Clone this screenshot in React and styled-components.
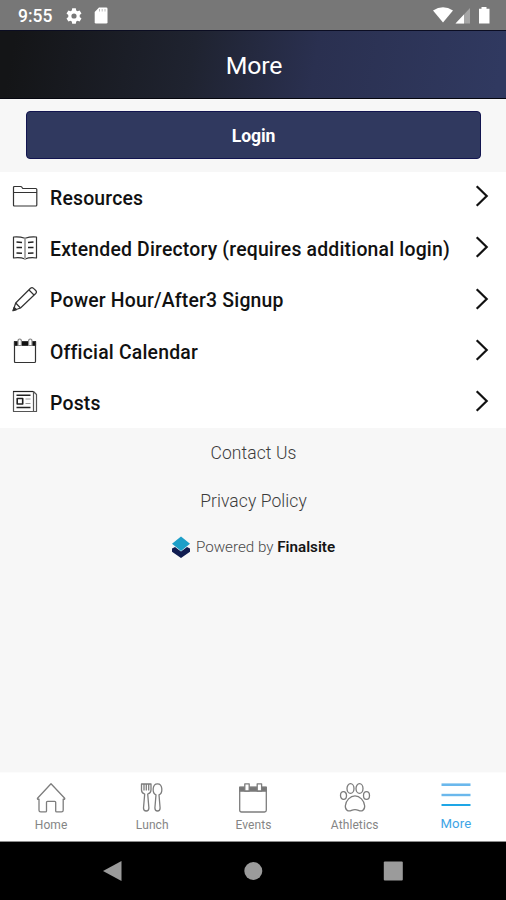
import React, { useState } from "react";
import styled, { createGlobalStyle } from "styled-components";

const GlobalStyle = createGlobalStyle`
  * {
    box-sizing: border-box;
  }

  body {
    margin: 0;
    font-family: Roboto, sans-serif;
    background: #f7f7f7;
  }
`;

const Screen = styled.div`
  width: 506px;
  height: 900px;
  display: flex;
  flex-direction: column;
  overflow: hidden;
  background: #f7f7f7;
`;

const StatusBar = styled.div`
  height: 30px;
  flex: none;
  display: flex;
  justify-content: space-between;
  background: #777777;
  color: #fff;
`;

const StatusGroup = styled.div`
  display: flex;
  align-items: center;
  padding: 1px 0 0 18px;
`;

const Clock = styled.span`
  width: 48px;
  font-size: 17.5px;
  font-weight: 500;
  line-height: 30px;
`;

const Header = styled.header`
  height: 69px;
  flex: none;
  display: flex;
  align-items: center;
  justify-content: center;
  padding: 2px 0 0 2px;
  border-top: 1px solid #0b0d22;
  border-bottom: 1px solid #05060f;
  background: linear-gradient(100deg, #141517 3%, #1f2330 38%, #2a3050 62%, #303960 98%);
  color: #fff;
  font-size: 24.8px;
  letter-spacing: -0.2px;
`;

const LoginArea = styled.div`
  height: 73px;
  flex: none;
  padding: 12px 25px 0 26px;
`;

const LoginButton = styled.button`
  display: block;
  width: 100%;
  height: 48px;
  padding: 1px 0 0;
  border: 1.5px solid #121550;
  border-radius: 4px;
  background: #30395f;
  color: #fff;
  font-family: inherit;
  font-size: 17.6px;
  font-weight: 700;
  letter-spacing: -0.1px;
`;

const Menu = styled.nav`
  flex: none;
  background: #fff;
`;

const MenuRow = styled.a`
  height: 51.3px;
  display: flex;
  align-items: center;
  padding: 0 17px 0 12px;
  color: #111;
`;

const MenuIcon = styled.svg`
  margin-top: -2px;
`;

const MenuLabel = styled.span`
  flex: 1;
  padding: 1px 0 0 12px;
  font-size: 19.4px;
  font-weight: 500;
  letter-spacing: 0.19px;
  white-space: nowrap;
`;

const ChevronIcon = styled.svg`
  margin-top: -3px;
`;

const Links = styled.div`
  flex: 1;
  display: flex;
  flex-direction: column;
  align-items: center;
  padding: 1px 0 0 1px;
`;

const FooterLink = styled.a`
  height: 48px;
  line-height: 48px;
  color: #3c3c3c;
  font-size: 17.5px;
  font-weight: 300;
  letter-spacing: 0.08px;
`;

const Powered = styled.div`
  height: 44px;
  display: flex;
  align-items: center;
  gap: 6px;
  color: #4a4a4a;
  font-size: 15.2px;
  font-weight: 300;

  b {
    color: #151515;
    font-weight: 600;
  }
`;

const TabBar = styled.div`
  height: 70px;
  flex: none;
  display: grid;
  grid-template-columns: repeat(5, 1fr);
  background: #fff;
  border-top: 1px solid #fcfcfc;
  border-bottom: 1px solid #8d8d8d;
`;

const Tab = styled.div`
  display: flex;
  flex-direction: column;
  align-items: center;
  padding: 9px 0 0 1px;
  color: ${props => (props.$active ? "#3ea5e6" : "#858585")};
  font-size: ${props => (props.$active ? "13.2px" : "12px")};
  letter-spacing: 0.1px;
  line-height: 20px;

  svg {
    margin-bottom: ${props => (props.$active ? "0" : "1px")};
  }
`;

const NavBar = styled.div`
  height: 58px;
  flex: none;
  display: flex;
  align-items: center;
  justify-content: center;
  gap: 116px;
  background: #000;
`;

const GearIcon = () => (
  <svg width="16" height="16" viewBox="0 0 16 16" fill="#fff">
    <path
      fillRule="evenodd"
      d="M6.200.2h3.600l.4 2.200 1.300.8 2.100-.8 1.900 3.100-1.800 1.500v2l1.800 1.500-1.900 3.100-2.100-.8-1.300.8-.4 2.200H6.200l-.4-2.200-1.300-.8-2.100.8L.5 10.500 2.300 9V7L.5 5.500l1.900-3.100 2.100.8 1.300-.8zM8 5.400a2.600 2.600 0 1 0 0 5.200 2.600 2.600 0 0 0 0-5.200z"
    />
  </svg>
);

const CardSvg = styled.svg`
  margin-left: 12px;
`;

const CardIcon = () => (
  <CardSvg width="14" height="17" viewBox="0 0 14 17">
    <path d="M5 .5h7.200q1.300 0 1.300 1.300v13.400q0 1.300-1.300 1.300H2q-1.300 0-1.300-1.300V5z" fill="#fff" />
    <path d="M5.500 2v2.500M8.200 2v2.500M11 2v2.500" stroke="#bbb" strokeWidth="1" />
  </CardSvg>
);

const SignalIcons = () => (
  <svg width="76" height="30" viewBox="430 0 76 30">
    <path d="M433 10.500Q443 4 453 10.500L443 22.500z" fill="#fff" />
    <path d="M470 8v15.500h-14.500z" fill="#a5a5a5" />
    <path d="M464 14.500v9h-8.500z" fill="#fff" />
    <path d="M481.500 7h5v1.800h3v14.700h-10.500V8.800h2.500z" fill="#fff" />
  </svg>
);

const RowIcon = ({ children }) => (
  <MenuIcon
    width="26"
    height="26"
    viewBox="0 0 26 26"
    fill="none"
    stroke="#333"
    strokeWidth="1.2"
    strokeLinejoin="round"
  >
    {children}
  </MenuIcon>
);

const FolderIcon = () => (
  <RowIcon>
    <path d="M1.500 21V3.500q0-1 1-1h6q1 0 1.500.8l.8 1.200h13q1 0 1 1V21q0 1-1 1H2.500q-1 0-1-1zM1.500 8.500h23.300" />
  </RowIcon>
);

const BookIcon = () => (
  <RowIcon>
    <path d="M13 3.200Q7 1.300 1.500 2v21Q8 22 13 24q5-2 11.500-1V2Q19 1.300 13 3.200z" />
    <path d="M13 3.500V24" stroke="#aaa" strokeWidth="2" />
    <path
      d="M4.500 7l5.500.5M4.500 12.500h5.500M4.500 18l5.500.3M21.500 7l-5.500.5M21.500 12.500H16M21.500 18l-5.500.3"
      stroke="#222"
      strokeWidth="1.4"
    />
  </RowIcon>
);

const PencilIcon = () => (
  <RowIcon>
    <path d="M1.200 24.500l2.500-7.500L18.500 2.300q1.500-1.500 3 0l2.200 2.200q1.500 1.500 0 3L8.500 22z" />
    <path d="M3.700 17l4.800 5M17 4l5 5" />
    <path d="M1 24.800l1.200-3.500 2.300 2.300z" fill="#222" />
  </RowIcon>
);

const CalendarIcon = () => (
  <RowIcon>
    <path d="M2.500 3.500h21v20q0 1-1 1h-19q-1 0-1-1z" />
    <path d="M2.500 3.500h21v4h-21z" fill="#111" />
    <path
      d="M6 7.500V3.200q0-2.200 1.700-2.200t1.700 2.200v4.300zM16.600 7.500V3.200q0-2.200 1.700-2.200T20 3.200v4.300z"
      fill="#fff"
      stroke="#888"
    />
  </RowIcon>
);

const NewsIcon = () => (
  <RowIcon>
    <path d="M1.500 2.500h20l3 3v17h-23zM21.500 2.500v20" stroke="#555" />
    <path d="M1 2.500h20" stroke="#222" />
    <path d="M4.500 6.300h14M4.500 18.500h14" stroke="#222" strokeWidth="1.6" />
    <path d="M5.200 9.500h5.500v5.500H5.200z" stroke="#222" strokeWidth="1.6" />
    <path d="M13.500 10h5M13.500 14.500h5" stroke="#999" />
  </RowIcon>
);

const Chevron = () => (
  <ChevronIcon width="14" height="22" viewBox="0 0 14 22" fill="none" stroke="#111" strokeWidth="2.2">
    <path d="M1.700 1.200L11.700 11l-10 9.800" />
  </ChevronIcon>
);

const LogoIcon = () => (
  <svg width="18" height="22" viewBox="0 0 18 22">
    <path d="M0 12.500l3-1.500 6 4.500 6-4.500 3 1.500v3.300L9 22 0 15.800z" fill="#101c50" />
    <path d="M9 .5l9 7.300-9 7.300-9-7.300z" fill="#1d9fc8" />
  </svg>
);

const TabIcon = ({ children }) => (
  <svg
    width="32"
    height="32"
    viewBox="0 0 32 32"
    fill="none"
    stroke="#7d7d7d"
    strokeWidth="1.3"
    strokeLinejoin="round"
  >
    {children}
  </svg>
);

const HomeIcon = () => (
  <TabIcon>
    <path d="M16 1.800L2.500 16.200q-.5 1.300 1.500 1v11q0 1.700 1.700 1.700h4.800q1 0 1-1v-8.600q0-1 1-1h7.200q1 0 1 1v8.600q0 1 1 1h4.800q1.700 0 1.700-1.700v-11q2 .3 1.500-1z" />
  </TabIcon>
);

const LunchIcon = () => (
  <TabIcon>
    <path d="M5.500 2v6q0 3 3.200 4L7.500 26q0 3 2.700 3t2.700-3l-1.200-14q3.300-1 3.300-4V2zM8 2v6.500M10.300 2v6.500M12.700 2v6.500" />
    <path d="M21.500 1.800c-5.500 0-5.500 9.700-1.500 11L18.900 26q0 3 2.600 3t2.600-3L23 12.800c4-1.300 4-11-1.500-11z" />
  </TabIcon>
);

const EventsIcon = () => (
  <TabIcon>
    <path d="M2.700 5.500h26.600v22.700q0 1.800-1.800 1.800h-23q-1.800 0-1.800-1.800z" />
    <path d="M2.700 5.200h26.600v4H2.700z" fill="#777" />
    <path d="M7.800 9V1.800h4.400V9zM20.200 9V1.800h4.400V9z" fill="#fff" />
  </TabIcon>
);

const PawIcon = () => (
  <TabIcon>
    <ellipse cx="11.500" cy="6.500" rx="3.500" ry="4.900" />
    <ellipse cx="20.500" cy="6.500" rx="3.500" ry="4.900" />
    <ellipse cx="4.500" cy="13.500" rx="3" ry="3.900" />
    <ellipse cx="27.500" cy="13.500" rx="3" ry="3.900" />
    <path d="M16 13.800c-4.500 0-9.500 4.800-9.700 10.300 0 5 3.700 5.500 6.200 4.200q3.500-1.400 7 0c2.500 1.300 6.200.8 6.200-4.200-.2-5.500-5.200-10.300-9.700-10.300z" />
  </TabIcon>
);

const MoreIcon = () => (
  <TabIcon>
    <path d="M1.500 2.700h29" stroke="#6bb8ec" strokeWidth="2.6" />
    <path d="M1.500 13h29" stroke="#6bb8ec" strokeWidth="2.4" />
    <path d="M1.500 23h29" stroke="#1ea6e6" strokeWidth="2" />
  </TabIcon>
);

const menuItems = [
  { label: "Resources", Icon: FolderIcon },
  { label: "Extended Directory (requires additional login)", Icon: BookIcon },
  { label: "Power Hour/After3 Signup", Icon: PencilIcon },
  { label: "Official Calendar", Icon: CalendarIcon },
  { label: "Posts", Icon: NewsIcon },
];

const tabs = [
  { label: "Home", Icon: HomeIcon },
  { label: "Lunch", Icon: LunchIcon },
  { label: "Events", Icon: EventsIcon },
  { label: "Athletics", Icon: PawIcon },
  { label: "More", Icon: MoreIcon },
];

const App = () => {
  const [active, setActive] = useState("More");

  return (
    <Screen>
      <GlobalStyle />
      <StatusBar>
        <StatusGroup>
          <Clock>9:55</Clock>
          <GearIcon />
          <CardIcon />
        </StatusGroup>
        <SignalIcons />
      </StatusBar>
      <Header>More</Header>
      <LoginArea>
        <LoginButton>Login</LoginButton>
      </LoginArea>
      <Menu>
        {menuItems.map(({ label, Icon }) => (
          <MenuRow key={label}>
            <Icon />
            <MenuLabel>{label}</MenuLabel>
            <Chevron />
          </MenuRow>
        ))}
      </Menu>
      <Links>
        <FooterLink>Contact Us</FooterLink>
        <FooterLink>Privacy Policy</FooterLink>
        <Powered>
          <LogoIcon />
          <span>
            Powered by <b>Finalsite</b>
          </span>
        </Powered>
      </Links>
      <TabBar>
        {tabs.map(({ label, Icon }) => (
          <Tab key={label} $active={active === label} onClick={() => setActive(label)}>
            <Icon />
            {label}
          </Tab>
        ))}
      </TabBar>
      <NavBar>
        <svg width="24" height="22" viewBox="0 0 24 22">
          <path d="M2 11L20.500 1v20z" fill="#9b9b9b" />
        </svg>
        <svg width="24" height="22" viewBox="0 0 24 22">
          <circle cx="12.300" cy="11" r="9" fill="#9b9b9b" />
        </svg>
        <svg width="24" height="22" viewBox="0 0 24 22">
          <rect x="2.800" y="1.500" width="19" height="19" rx="1" fill="#9b9b9b" />
        </svg>
      </NavBar>
    </Screen>
  );
};

export default App;
